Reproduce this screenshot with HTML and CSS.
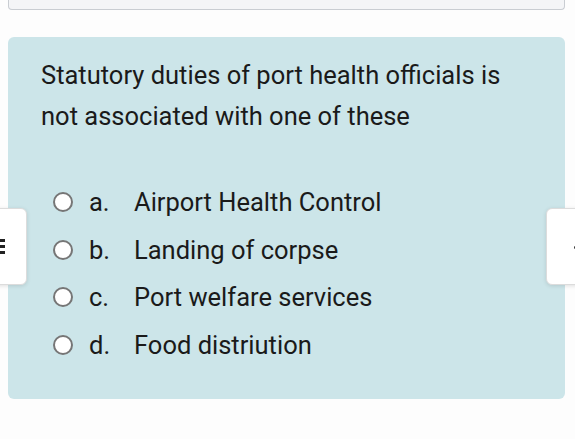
FILE: index.html
```html
<!DOCTYPE html>
<html lang="en">
<head>
  <meta charset="utf-8">
  <meta name="viewport" content="width=device-width, initial-scale=1">
  <title>Question</title>
  <link rel="stylesheet" href="styles.css">
</head>
<body>
  <div class="prev-card"></div>

  <div class="question-card">
    <div class="question-text">
      Statutory duties of port health officials is not associated with one of these
    </div>

    <div class="options">
      <label class="option">
        <span class="radio"></span>
        <span class="letter">a.</span>
        <span class="answer">Airport Health Control</span>
      </label>
      <label class="option">
        <span class="radio"></span>
        <span class="letter">b.</span>
        <span class="answer">Landing of corpse</span>
      </label>
      <label class="option">
        <span class="radio"></span>
        <span class="letter">c.</span>
        <span class="answer">Port welfare services</span>
      </label>
      <label class="option">
        <span class="radio"></span>
        <span class="letter">d.</span>
        <span class="answer">Food distriution</span>
      </label>
    </div>
  </div>

  <!-- side drawer handles -->
  <div class="side-tab side-tab-left">
    <span class="menu-icon"><i></i><i></i><i></i></span>
  </div>
  <div class="side-tab side-tab-right">
    <span class="dot"></span>
  </div>
</body>
</html>
```

FILE: styles.css
```css
* {
  box-sizing: border-box;
}

body {
  margin: 0;
  padding: 0 10px 0 8px;
  background: #fdfdfd;
  font-family: Roboto, 'Noto Sans', sans-serif;
  color: #1a1a1a;
  height: 439px;
  overflow: hidden;
  position: relative;
}

.prev-card {
  height: 14px;
  margin-top: -4px;
  background: #f4f5f7;
  border: 1px solid #c9cdd2;
  border-top: none;
  border-radius: 0 0 4px 4px;
}

.question-card {
  margin-top: 27px;
  background: #cce5e9;
  border-radius: 6px;
  padding: 18px 30px 30px 33px;
}

.question-text {
  font-size: 25.5px;
  line-height: 41px;
}

.options {
  margin-top: 41px;
  padding-left: 12px;
}

.option {
  display: flex;
  align-items: center;
  height: 47.7px;
  font-size: 25.5px;
}

.radio {
  width: 20px;
  height: 20px;
  border: 2px solid #767676;
  border-radius: 50%;
  background: white;
  flex-shrink: 0;
}

.letter {
  width: 45px;
  margin-left: 16px;
}

.side-tab {
  position: absolute;
  top: 208px;
  height: 77px;
  background: white;
  border: 1px solid #dcdcdc;
  border-radius: 6px;
  box-shadow: 0 1px 4px rgba(0, 0, 0, 0.12);
}

.side-tab-left {
  left: -20px;
  width: 47px;
}

.side-tab-right {
  left: 546px;
  width: 50px;
}

.menu-icon {
  position: absolute;
  left: 19px;
  top: 30px;
  display: flex;
  flex-direction: column;
  gap: 3px;
}

.menu-icon i {
  display: block;
  width: 5px;
  height: 3px;
  background: #222;
}

.dot {
  position: absolute;
  left: 27px;
  top: 37px;
  width: 3px;
  height: 3px;
  background: #333;
  border-radius: 50%;
}
```
